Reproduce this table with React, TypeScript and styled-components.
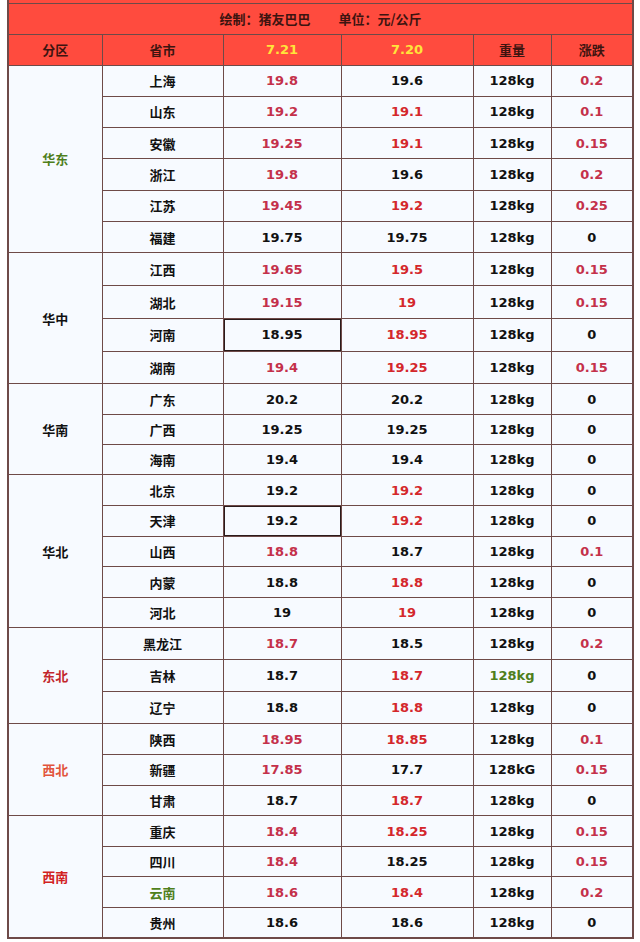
import * as React from 'react';
import styled, {createGlobalStyle} from 'styled-components';

const colors = {
    BORDER: '#6e4a48',
    HEAD: '#ff4b3e',
    CELL: '#f7faff',
    INK: '#111111',
    RED: '#c4304a',
    RED2: '#d4272b',
    GREEN: '#4f7f1c',
    ORANGE: '#e2543c',
    YELLOW: '#ffe53a',
};

const GlobalStyle = createGlobalStyle`
    html, body {
        margin: 0;
        padding: 0;
        background: #ffffff;
    }
    body {
        font-family: "DejaVu Sans", "Noto Sans CJK SC", sans-serif;
    }
`;

const Page = styled.div`
    width: 640px;
    height: 942px;
    padding: 0 0 0 7px;
    box-sizing: border-box;
    overflow: hidden;
`;

const Sheet = styled.table`
    width: 625px;
    border-collapse: collapse;
    table-layout: fixed;
    border-right: 2px solid ${colors.BORDER};
    border-left: 2px solid ${colors.BORDER};
    border-bottom: 2px solid ${colors.BORDER};
`;

const CapRow = styled.tr`
    height: 3px;
    td {
        background: ${colors.HEAD};
        border-bottom: 1px solid ${colors.BORDER};
        padding: 0;
    }
`;

const TitleCell = styled.td`
    height: 30px;
    background: ${colors.HEAD};
    border-bottom: 1px solid ${colors.BORDER};
    text-align: center;
    font-family: "Noto Sans CJK SC", sans-serif;
    font-weight: 700;
    font-size: 13px;
    color: #3d1410;
    padding: 0;
`;

const TitlePart = styled.span`
    margin: 0 14px;
`;

const HeadCell = styled.th<{$date?: boolean}>`
    height: 30px;
    background: ${colors.HEAD};
    border: 1px solid ${colors.BORDER};
    border-top: none;
    text-align: center;
    font-family: ${(p) => (p.$date ? '"DejaVu Sans", sans-serif' : '"Noto Sans CJK SC", sans-serif')};
    font-weight: 700;
    font-size: ${(p) => (p.$date ? '13px' : '13px')};
    color: ${(p) => (p.$date ? colors.YELLOW : '#3d1410')};
    padding: 0;
`;

const Row = styled.tr<{$h: number}>`
    height: ${(p) => p.$h}px;
`;

const RegionCell = styled.td<{$color: string}>`
    background: ${colors.CELL};
    border: 1px solid ${colors.BORDER};
    text-align: center;
    font-family: "Noto Sans CJK SC", sans-serif;
    font-weight: 700;
    font-size: 13px;
    color: ${(p) => p.$color};
    padding: 0;
`;

const Cell = styled.td<{$color?: string; $cjk?: boolean; $boxed?: boolean}>`
    position: relative;
    background: ${colors.CELL};
    border: 1px solid ${colors.BORDER};
    text-align: center;
    font-family: ${(p) => (p.$cjk ? '"Noto Sans CJK SC", sans-serif' : '"DejaVu Sans", "Noto Sans CJK SC", sans-serif')};
    font-weight: 700;
    font-size: 13px;
    color: ${(p) => p.$color || colors.INK};
    padding: 0;
    box-shadow: ${(p) => (p.$boxed ? `inset 0 0 0 1px #2a1a1a` : 'none')};
`;

type C = 'k' | 'r' | 'r2' | 'g';
const tone = (c: C) =>
    c === 'r' ? colors.RED : c === 'r2' ? colors.RED2 : c === 'g' ? colors.GREEN : colors.INK;

type Line = {
    city: string;
    cityColor?: string;
    now: string;
    nowC: C;
    prev: string;
    prevC: C;
    weight?: string;
    weightC?: C;
    diff: string;
    diffC: C;
    boxed?: boolean;
};

type Group = {name: string; color: string; height: number; lines: Line[]};

const L = (
    city: string,
    now: string,
    nowC: C,
    prev: string,
    prevC: C,
    diff: string,
    diffC: C,
    extra: Partial<Line> = {}
): Line => ({city, now, nowC, prev, prevC, diff, diffC, ...extra});

const groups: Group[] = [
    {
        name: '华东',
        color: colors.GREEN,
        height: 188 / 6,
        lines: [
            L('上海', '19.8', 'r', '19.6', 'k', '0.2', 'r'),
            L('山东', '19.2', 'r', '19.1', 'r2', '0.1', 'r'),
            L('安徽', '19.25', 'r', '19.1', 'r2', '0.15', 'r'),
            L('浙江', '19.8', 'r', '19.6', 'k', '0.2', 'r'),
            L('江苏', '19.45', 'r', '19.2', 'r2', '0.25', 'r'),
            L('福建', '19.75', 'k', '19.75', 'k', '0', 'k'),
        ],
    },
    {
        name: '华中',
        color: colors.INK,
        height: 131 / 4,
        lines: [
            L('江西', '19.65', 'r', '19.5', 'r2', '0.15', 'r'),
            L('湖北', '19.15', 'r', '19', 'r2', '0.15', 'r'),
            L('河南', '18.95', 'k', '18.95', 'r2', '0', 'k', {boxed: true}),
            L('湖南', '19.4', 'r', '19.25', 'r2', '0.15', 'r'),
        ],
    },
    {
        name: '华南',
        color: colors.INK,
        height: 91 / 3,
        lines: [
            L('广东', '20.2', 'k', '20.2', 'k', '0', 'k'),
            L('广西', '19.25', 'k', '19.25', 'k', '0', 'k'),
            L('海南', '19.4', 'k', '19.4', 'k', '0', 'k'),
        ],
    },
    {
        name: '华北',
        color: colors.INK,
        height: 153 / 5,
        lines: [
            L('北京', '19.2', 'k', '19.2', 'r2', '0', 'k'),
            L('天津', '19.2', 'k', '19.2', 'r2', '0', 'k', {boxed: true}),
            L('山西', '18.8', 'r', '18.7', 'k', '0.1', 'r'),
            L('内蒙', '18.8', 'k', '18.8', 'r2', '0', 'k'),
            L('河北', '19', 'k', '19', 'r2', '0', 'k'),
        ],
    },
    {
        name: '东北',
        color: '#c2262c',
        height: 96 / 3,
        lines: [
            L('黑龙江', '18.7', 'r', '18.5', 'k', '0.2', 'r'),
            L('吉林', '18.7', 'k', '18.7', 'r2', '0', 'k', {weightC: 'g'}),
            L('辽宁', '18.8', 'k', '18.8', 'r2', '0', 'k'),
        ],
    },
    {
        name: '西北',
        color: colors.ORANGE,
        height: 92 / 3,
        lines: [
            L('陕西', '18.95', 'r', '18.85', 'r2', '0.1', 'r'),
            L('新疆', '17.85', 'r', '17.7', 'k', '0.15', 'r', {weight: '128kG'}),
            L('甘肃', '18.7', 'k', '18.7', 'r2', '0', 'k'),
        ],
    },
    {
        name: '西南',
        color: '#d2221f',
        height: 122 / 4,
        lines: [
            L('重庆', '18.4', 'r', '18.25', 'r2', '0.15', 'r'),
            L('四川', '18.4', 'r', '18.25', 'k', '0.15', 'r'),
            L('云南', '18.6', 'r', '18.4', 'r2', '0.2', 'r', {cityColor: colors.GREEN}),
            L('贵州', '18.6', 'k', '18.6', 'k', '0', 'k'),
        ],
    },
];

const widths = [94, 121, 118, 132, 78, 82];

const App: React.FC = () => {
    return (
        <Page>
            <GlobalStyle />
            <Sheet>
                <colgroup>
                    {widths.map((w, i) => (
                        <col key={i} style={{width: w}} />
                    ))}
                </colgroup>
                <tbody>
                    <CapRow>
                        <td colSpan={6} />
                    </CapRow>
                    <tr>
                        <TitleCell colSpan={6}>
                            <TitlePart>绘制：猪友巴巴</TitlePart>
                            <TitlePart>单位：元/公斤</TitlePart>
                        </TitleCell>
                    </tr>
                    <tr>
                        <HeadCell>分区</HeadCell>
                        <HeadCell>省市</HeadCell>
                        <HeadCell $date>7.21</HeadCell>
                        <HeadCell $date>7.20</HeadCell>
                        <HeadCell>重量</HeadCell>
                        <HeadCell>涨跌</HeadCell>
                    </tr>
                    {groups.map((g) =>
                        g.lines.map((line, i) => (
                            <Row key={g.name + line.city} $h={g.height}>
                                {i === 0 && (
                                    <RegionCell rowSpan={g.lines.length} $color={g.color}>
                                        {g.name}
                                    </RegionCell>
                                )}
                                <Cell $cjk $color={line.cityColor}>
                                    {line.city}
                                </Cell>
                                <Cell $color={tone(line.nowC)} $boxed={line.boxed}>
                                    {line.now}
                                </Cell>
                                <Cell $color={tone(line.prevC)}>{line.prev}</Cell>
                                <Cell $color={tone(line.weightC || 'k')}>{line.weight || '128kg'}</Cell>
                                <Cell $color={tone(line.diffC)}>{line.diff}</Cell>
                            </Row>
                        ))
                    )}
                </tbody>
            </Sheet>
        </Page>
    );
};

export default App;
